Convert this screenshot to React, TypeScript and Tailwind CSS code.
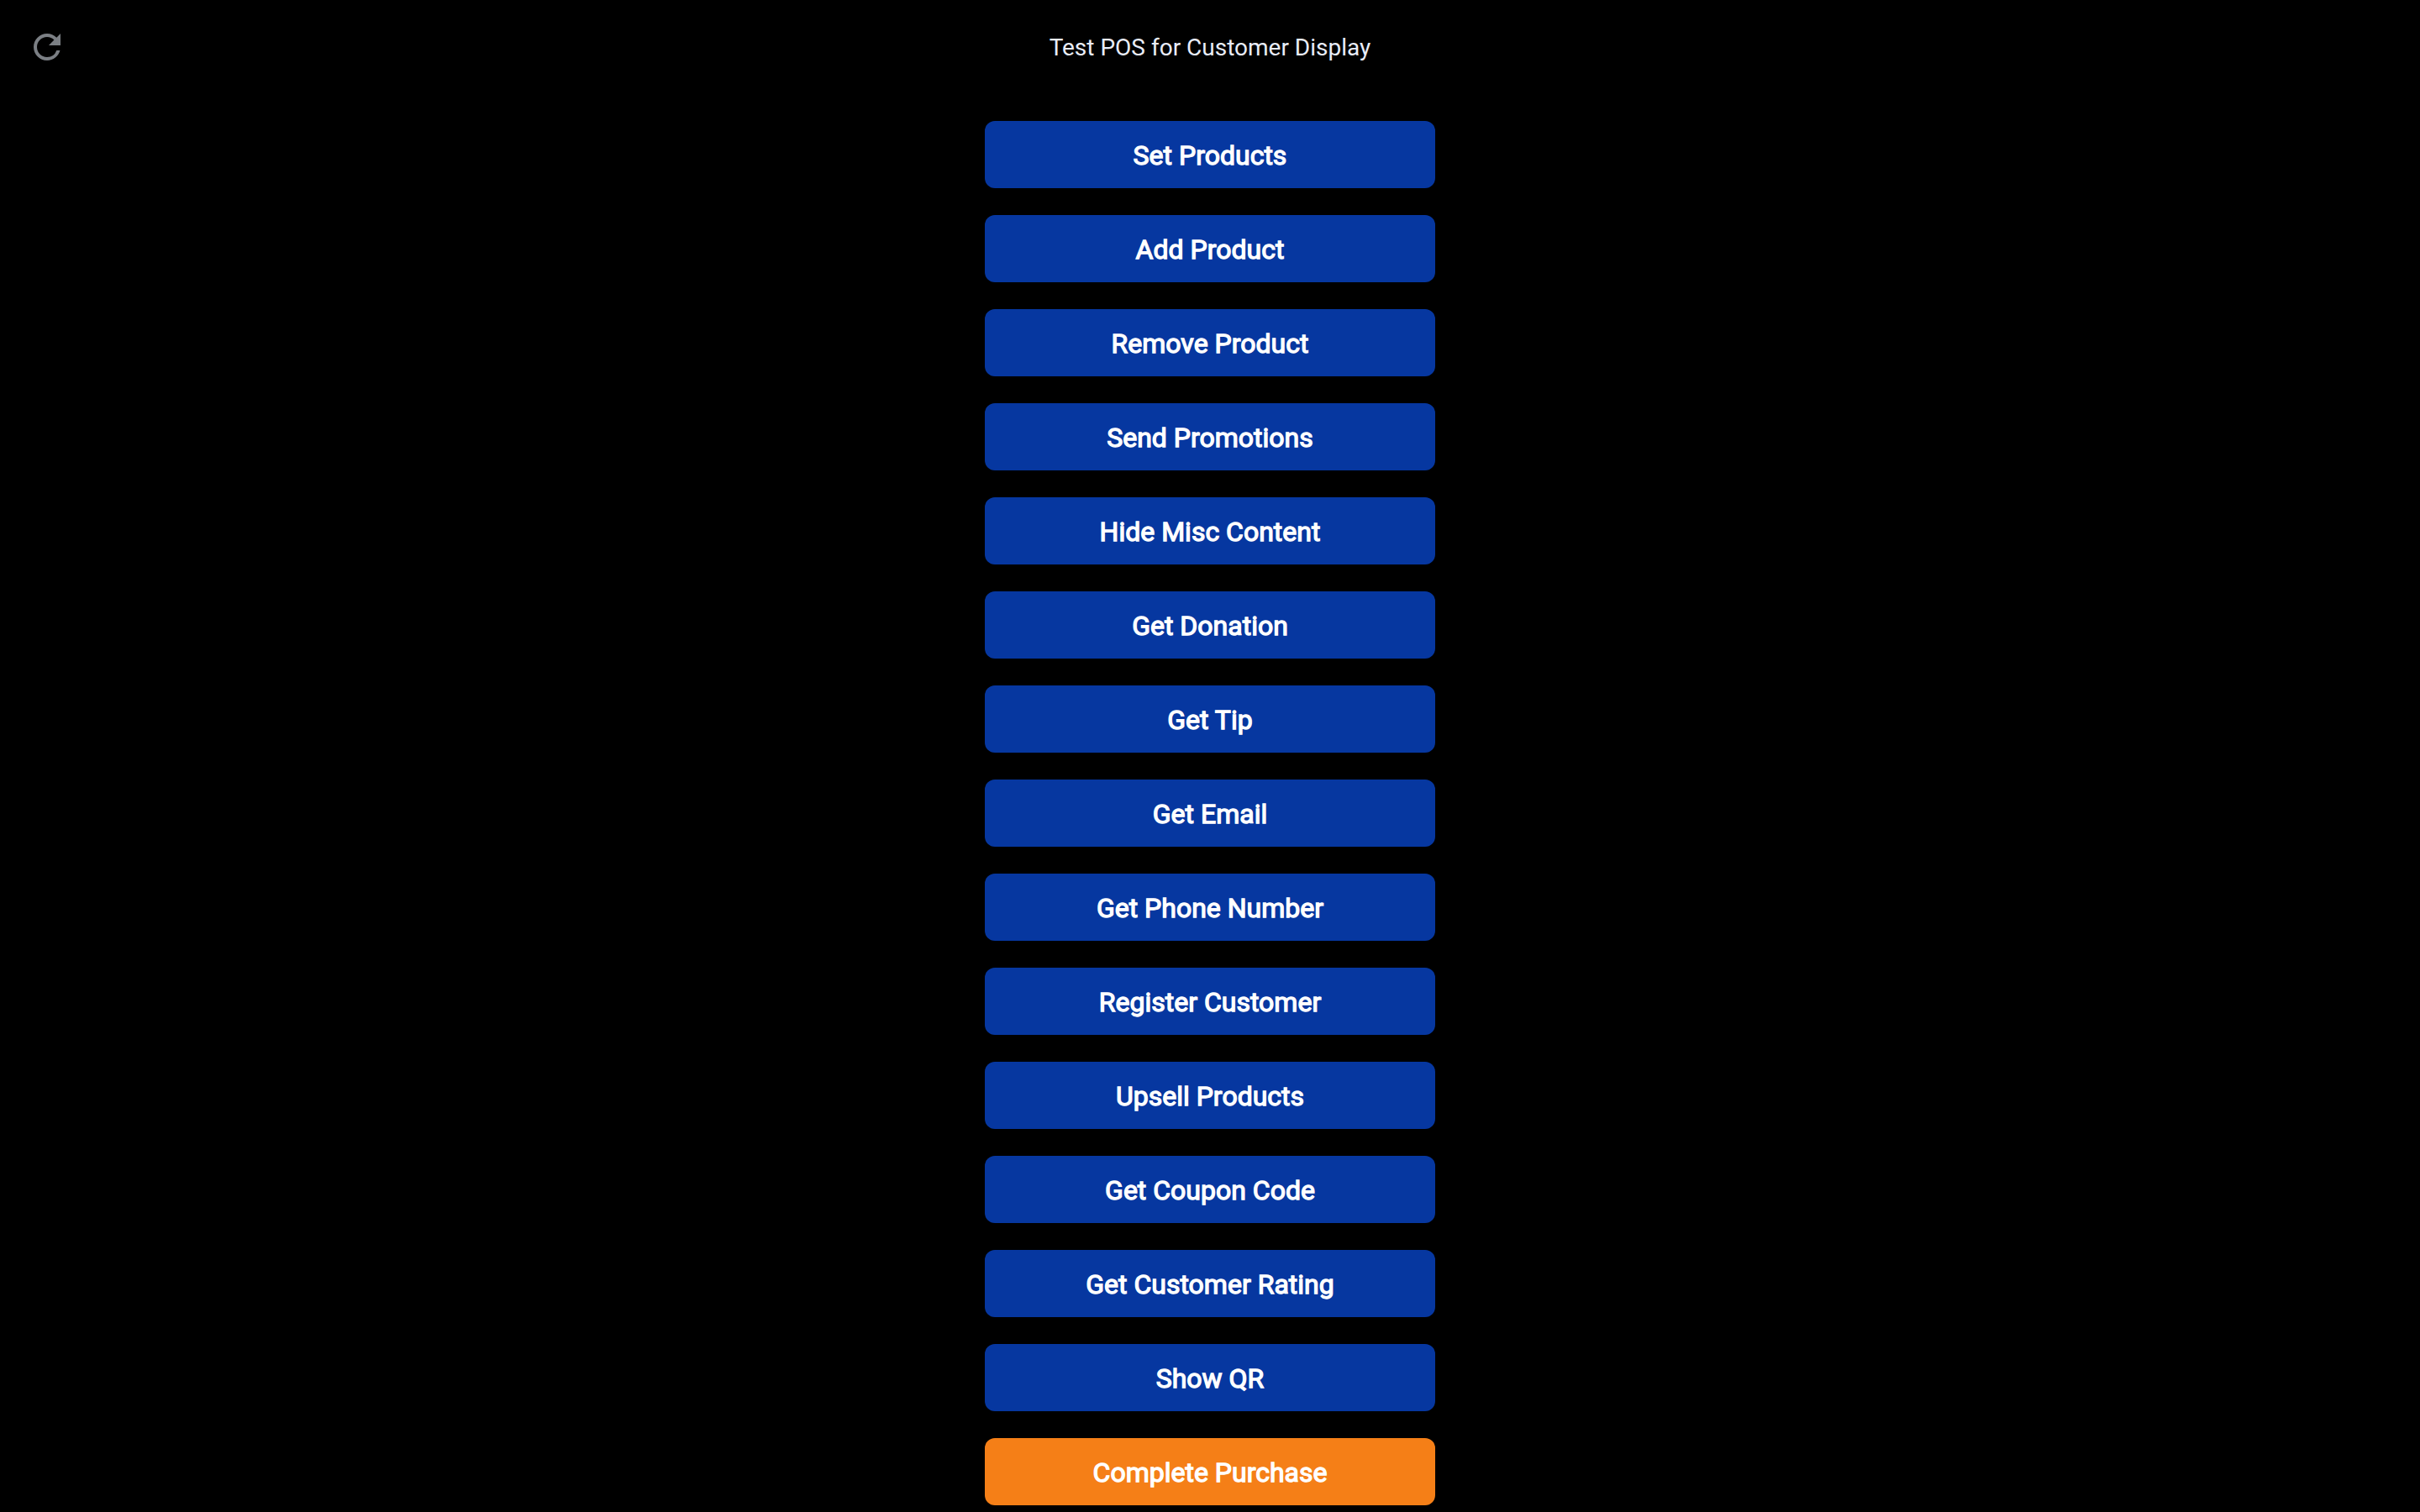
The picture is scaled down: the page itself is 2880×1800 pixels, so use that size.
import { MdRefresh } from "react-icons/md";

const actions = [
  "Set Products",
  "Add Product",
  "Remove Product",
  "Send Promotions",
  "Hide Misc Content",
  "Get Donation",
  "Get Tip",
  "Get Email",
  "Get Phone Number",
  "Register Customer",
  "Upsell Products",
  "Get Coupon Code",
  "Get Customer Rating",
  "Show QR",
];

function ActionButton({ label, primary = false }: { label: string; primary?: boolean }) {
  return (
    <button
      type="button"
      className={`flex h-20 w-full items-center justify-center rounded-xl pt-0.5 text-[32px] leading-10 font-normal text-white [-webkit-text-stroke:0.04em_white] ${
        primary ? "bg-[#f57f17]" : "bg-[#0637a0]"
      }`}
    >
      {label}
    </button>
  );
}

export default function App() {
  return (
    <div className="min-h-screen bg-black font-['Roboto',sans-serif]">
      <header className="grid h-28 grid-cols-[1fr_auto_1fr] items-center px-8">
        <button type="button" aria-label="Refresh" className="size-12 text-[#7b7f84]">
          <MdRefresh className="size-12" />
        </button>
        <h1 className="pt-0.5 text-[28px] leading-8 font-normal text-[#e9edf9]">Test POS for Customer Display</h1>
      </header>
      <main className="mx-auto flex w-full max-w-[536px] flex-col gap-8 pt-8">
        {actions.map((label) => (
          <ActionButton key={label} label={label} />
        ))}
        <ActionButton label="Complete Purchase" primary />
      </main>
    </div>
  );
}
